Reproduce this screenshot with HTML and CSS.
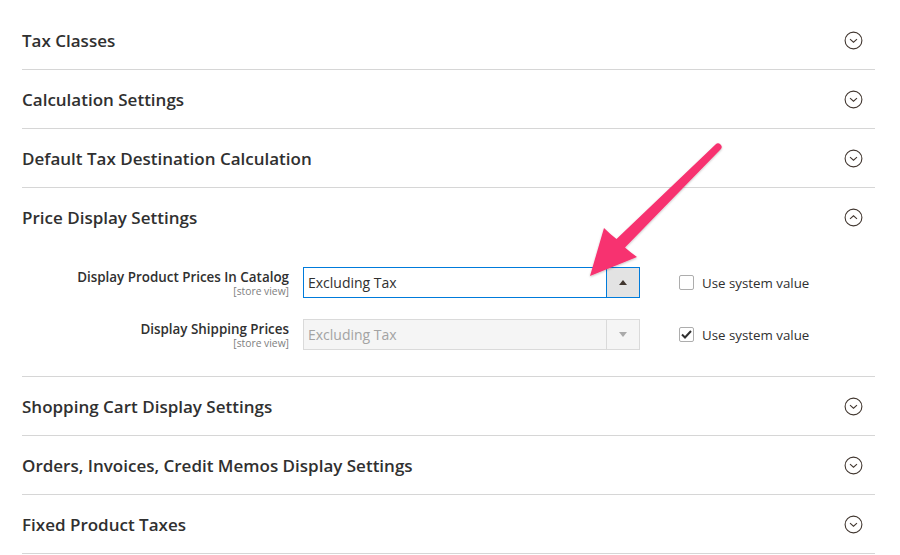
FILE: index.html
```html
<!DOCTYPE html>
<html lang="en">
<head>
    <meta charset="UTF-8">
    <meta name="viewport" content="width=device-width, initial-scale=1.0">
    <title>Tax Configuration</title>
    <link rel="stylesheet" href="styles.css">
</head>
<body>
    <div class="page">
        <div class="section">
            <div class="section-head">
                <span class="section-title">Tax Classes</span>
                <svg class="toggle" width="19" height="19" viewBox="0 0 19 19"><circle cx="9.5" cy="9.5" r="8.4"/><path d="M6 8.2 L9.5 11.2 L13 8.2"/></svg>
            </div>
        </div>
        <div class="section">
            <div class="section-head">
                <span class="section-title">Calculation Settings</span>
                <svg class="toggle" width="19" height="19" viewBox="0 0 19 19"><circle cx="9.5" cy="9.5" r="8.4"/><path d="M6 8.2 L9.5 11.2 L13 8.2"/></svg>
            </div>
        </div>
        <div class="section">
            <div class="section-head">
                <span class="section-title">Default Tax Destination Calculation</span>
                <svg class="toggle" width="19" height="19" viewBox="0 0 19 19"><circle cx="9.5" cy="9.5" r="8.4"/><path d="M6 8.2 L9.5 11.2 L13 8.2"/></svg>
            </div>
        </div>
        <div class="section">
            <div class="section-head">
                <span class="section-title">Price Display Settings</span>
                <svg class="toggle" width="19" height="19" viewBox="0 0 19 19"><circle cx="9.5" cy="9.5" r="8.4"/><path d="M6 10.8 L9.5 7.8 L13 10.8"/></svg>
            </div>
            <div class="fieldset">
                <div class="field-label">
                    <span class="label-text">Display Product Prices In Catalog</span>
                    <span class="scope">[store view]</span>
                </div>
                <div class="select focused">
                    <span class="select-value">Excluding Tax</span>
                    <span class="select-btn"><span class="tri up"></span></span>
                </div>
                <label class="system">
                    <span class="check"></span>
                    Use system value
                </label>

                <div class="field-label">
                    <span class="label-text">Display Shipping Prices</span>
                    <span class="scope">[store view]</span>
                </div>
                <div class="select disabled">
                    <span class="select-value">Excluding Tax</span>
                    <span class="select-btn"><span class="tri down"></span></span>
                </div>
                <label class="system">
                    <span class="check checked">
                        <svg width="11" height="9" viewBox="0 0 11 9"><path d="M1 4.5 L4 7.5 L10 1"/></svg>
                    </span>
                    Use system value
                </label>
            </div>
        </div>
        <div class="section">
            <div class="section-head">
                <span class="section-title">Shopping Cart Display Settings</span>
                <svg class="toggle" width="19" height="19" viewBox="0 0 19 19"><circle cx="9.5" cy="9.5" r="8.4"/><path d="M6 8.2 L9.5 11.2 L13 8.2"/></svg>
            </div>
        </div>
        <div class="section">
            <div class="section-head">
                <span class="section-title">Orders, Invoices, Credit Memos Display Settings</span>
                <svg class="toggle" width="19" height="19" viewBox="0 0 19 19"><circle cx="9.5" cy="9.5" r="8.4"/><path d="M6 8.2 L9.5 11.2 L13 8.2"/></svg>
            </div>
        </div>
        <div class="section">
            <div class="section-head">
                <span class="section-title">Fixed Product Taxes</span>
                <svg class="toggle" width="19" height="19" viewBox="0 0 19 19"><circle cx="9.5" cy="9.5" r="8.4"/><path d="M6 8.2 L9.5 11.2 L13 8.2"/></svg>
            </div>
        </div>
    </div>

    <!-- annotation arrow drawn over the form -->
    <svg class="arrow" width="900" height="555" viewBox="0 0 900 555">
        <defs>
            <filter id="soft" x="-20%" y="-20%" width="140%" height="140%">
                <feDropShadow dx="0" dy="1" stdDeviation="1.2" flood-color="#000" flood-opacity="0.25"/>
            </filter>
        </defs>
        <path filter="url(#soft)" d="M590 276 L604 228 Q610 234 616.5 239 L715.5 144.5 Q718 142 720.5 144.5 Q723 147 720.5 149.5 L625 247.5 Q630 252 637 257 Z"/>
    </svg>
</body>
</html>
```

FILE: styles.css
```css
body {
    margin: 0;
    background: #fff;
    font-family: "Open Sans", "Liberation Sans", sans-serif;
    color: #303030;
    position: relative;
    overflow: hidden;
}

.page {
    width: 853px;
    padding: 11px 0 0 22px;
}

.section {
    border-bottom: 1px solid #d6d6d6;
}

.section-head {
    height: 58px;
    display: flex;
    align-items: center;
    justify-content: space-between;
    padding-right: 12px;
}

.section-title {
    font-size: 17px;
    font-weight: 600;
    color: #303030;
}

.toggle {
    fill: none;
    stroke: #41362f;
    stroke-width: 1.1;
}

.fieldset {
    display: grid;
    grid-template-columns: 267px 337px auto;
    column-gap: 14px;
    row-gap: 21px;
    padding: 21px 0 26px;
}

.field-label {
    display: flex;
    flex-direction: column;
    align-items: flex-end;
    text-align: right;
    padding-top: 1px;
}

.label-text {
    font-size: 13.4px;
    font-weight: 600;
    line-height: 18px;
}

.scope {
    font-size: 10.3px;
    line-height: 11px;
    color: #808080;
}

.select {
    height: 31px;
    box-sizing: border-box;
    border: 1px solid #adadad;
    display: flex;
    align-items: stretch;
    background: #fff;
}

.select.focused {
    border-color: #007bdb;
}

.select.disabled {
    background: #f5f5f5;
    border-color: #dadada;
    color: #a3a3a3;
}

.select-value {
    flex: 1;
    display: flex;
    align-items: center;
    padding-left: 4px;
    font-size: 14px;
}

.select-btn {
    width: 32px;
    border-left: 1px solid #adadad;
    background: #e3e3e3;
    display: flex;
    align-items: center;
    justify-content: center;
}

.focused .select-btn {
    border-left-color: #007bdb;
}

.disabled .select-btn {
    background: #f5f5f5;
    border-left-color: #dadada;
}

.tri {
    width: 0;
    height: 0;
    border-left: 4px solid transparent;
    border-right: 4px solid transparent;
}

.tri.up {
    border-bottom: 5px solid #41362f;
}

.tri.down {
    border-top: 5px solid #aaa;
}

.system {
    display: flex;
    align-items: center;
    margin-left: 25px;
    font-size: 13.3px;
    color: #303030;
}

.check {
    width: 15px;
    height: 15px;
    box-sizing: border-box;
    border: 1px solid #adadad;
    border-radius: 2px;
    margin-right: 8px;
    display: flex;
    align-items: center;
    justify-content: center;
    background: #fff;
}

.check svg {
    fill: none;
    stroke: #303030;
    stroke-width: 2;
}

.arrow {
    position: absolute;
    top: 0;
    left: 0;
    pointer-events: none;
    fill: #f7336f;
}
```
